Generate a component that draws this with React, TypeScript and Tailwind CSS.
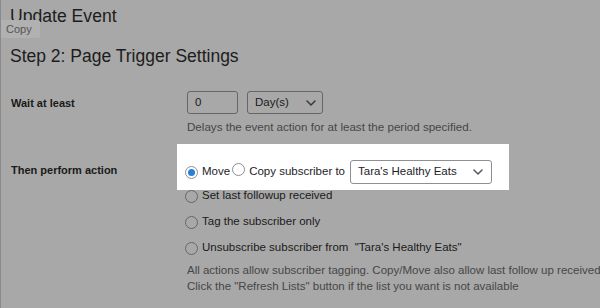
import React from "react";

function Chevron({ color }: { color: string }) {
  return (
    <svg width="10" height="6" viewBox="0 0 10 6" fill="none">
      <path d="M1 1l4 4 4-4" stroke={color} strokeWidth="1.5" strokeLinecap="round" strokeLinejoin="round" />
    </svg>
  );
}

function Radio({ checked, dim }: { checked?: boolean; dim?: boolean }) {
  return (
    <span
      className={
        "inline-flex items-center justify-center w-[13px] h-[13px] rounded-full border shrink-0 " +
        (dim ? "border-[#676767] bg-transparent" : "border-[#8c8f94] bg-white")
      }
    >
      {checked && <span className="w-[7px] h-[7px] rounded-full bg-[#2a7fd4]" />}
    </span>
  );
}

export default function App() {
  return (
    <div
      className="relative w-[600px] h-[308px] overflow-hidden bg-[#a8a8a8] border-l border-[#8a8a8a] text-[#1a1a1a]"
      style={{ fontFamily: '"Liberation Sans", Arial, sans-serif' }}
    >
      <div className="pl-[9px] pt-[5px]">
        <h1 className="text-[17.6px] leading-[22px] font-normal text-[#1c1c1c]">Update Event</h1>
        <h2 className="mt-[18px] text-[17.5px] leading-[22px] font-normal text-[#1c1c1c]">
          Step 2: Page Trigger Settings
        </h2>
      </div>

      <div className="absolute left-0 top-[20px] w-[39px] h-[18px] bg-[#b1b1b1] rounded-r-[2px] flex items-center pl-[5px] text-[11px] text-[#555555]">
        Copy
      </div>

      <div className="mt-[24px] grid grid-cols-[176px_1fr]">
        {/* Row 1 */}
        <div className="pl-[10px] pt-[4px] text-[11px] leading-[16px] font-bold text-[#1a1a1a]">Wait at least</div>
        <div className="pl-[10px]">
          <div className="flex items-center gap-[9px]">
            <div className="w-[51px] h-[23px] rounded-[3px] border border-[#666666] flex items-center pl-[7px] text-[11.5px] text-[#1a1a1a]">
              0
            </div>
            <div className="w-[76px] h-[23px] rounded-[3px] border border-[#666666] flex items-center justify-between pl-[7px] pr-[6px] text-[11.5px] text-[#1a1a1a]">
              <span>Day(s)</span>
              <Chevron color="#3a3a3a" />
            </div>
          </div>
          <p className="mt-[5px] text-[11.6px] leading-[16px] text-[#464646]">
            Delays the event action for at least the period specified.
          </p>
        </div>

        {/* Row 2 */}
        <div className="pl-[10px] pt-[18px] mt-[9px] text-[11px] leading-[16px] font-bold text-[#1a1a1a]">
          Then perform action
        </div>
        <div className="mt-[9px]">
          <div className="w-[332px] bg-white pt-[16px] pb-[6px] pl-[8px] pr-[16px] flex items-center text-[11.5px] text-[#1d2327]">
            <Radio checked />
            <span className="ml-[4px]">Move</span>
            <span className="ml-[2px]">
              <Radio />
            </span>
            <span className="ml-[4px]">Copy subscriber to</span>
            <div className="ml-[5px] w-[142px] h-[24px] rounded-[3px] border border-[#8c8f94] flex items-center justify-between pl-[7px] pr-[8px]">
              <span>Tara's Healthy Eats</span>
              <Chevron color="#50575e" />
            </div>
          </div>
          <div className="-mt-[7px] h-[26px] pl-[8px] flex items-center text-[11.5px] text-[#1a1a1a]">
            <Radio dim />
            <span className="ml-[4px]">Set last followup received</span>
          </div>
          <div className="h-[26px] pl-[8px] flex items-center text-[11.5px] text-[#1a1a1a]">
            <Radio dim />
            <span className="ml-[4px]">Tag the subscriber only</span>
          </div>
          <div className="h-[26px] pl-[8px] flex items-center text-[11.5px] text-[#1a1a1a] whitespace-pre">
            <Radio dim />
            <span className="ml-[4px]">Unsubscribe subscriber from  "Tara's Healthy Eats"</span>
          </div>
          <div className="mt-[1px] pl-[10px] text-[11.5px] leading-[16px] text-[#464646] whitespace-nowrap">
            <p>All actions allow subscriber tagging. Copy/Move also allow last follow up received</p>
            <p>Click the "Refresh Lists" button if the list you want is not available</p>
          </div>
        </div>
      </div>
    </div>
  );
}
